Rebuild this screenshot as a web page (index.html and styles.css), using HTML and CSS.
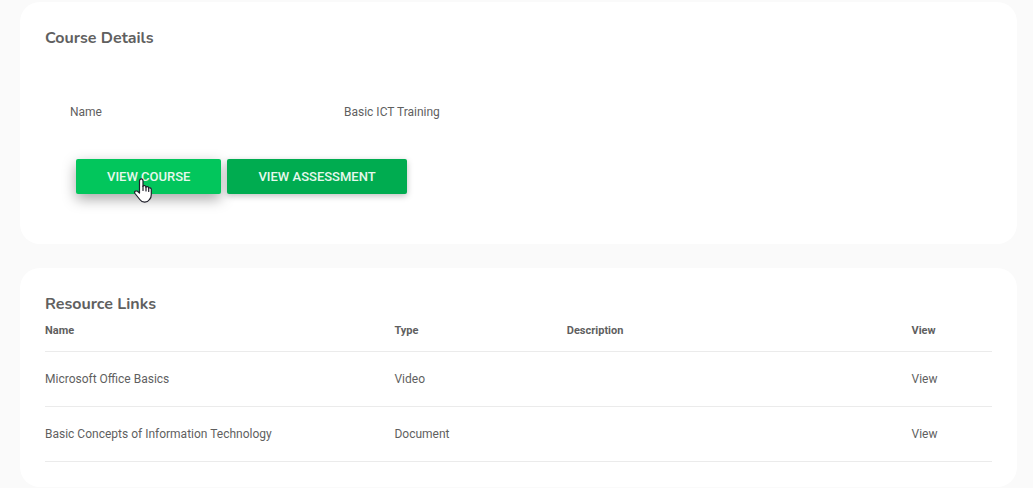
FILE: index.html
```html
<!DOCTYPE html>
<html lang="en">
<head>
  <meta charset="utf-8">
  <meta name="viewport" content="width=device-width, initial-scale=1">
  <title>Course Details</title>
  <link rel="stylesheet" href="styles.css">
</head>
<body class="page">
  <main class="stack">
    <section class="card" aria-labelledby="course-title">
      <h2 class="card-title" id="course-title">Course Details</h2>
      <div class="details">
        <dl class="detail-row">
          <dt class="detail-label">Name</dt>
          <dd class="detail-value">Basic ICT Training</dd>
        </dl>
        <div class="actions">
          <button class="button button-active" type="button">View Course
            <svg class="pointer" viewBox="0 0 18 25" width="18" height="25" aria-hidden="true">
              <path d="M5.500 15V3C5.500 .2 9 .2 9 3V8.500C9.300 7 12 7.200 12 9.300C12.500 8 14.700 8.300 14.700 10.300C15.300 9.300 17.300 9.700 17.300 11.500V16.500C17.300 18.700 16.500 20.500 15.500 21.500C13.500 24.800 8 25 5.800 21.500L1 15.500C-.2 13.500 1.800 12 3.500 13.300Z" fill="#fff" stroke="#20202b" stroke-width="1.200" stroke-linejoin="round"/>
              <path d="M9 8V12.500M12 9V13M14.700 10V13.500" fill="none" stroke="#20202b" stroke-width="1.200" stroke-linecap="round"/>
            </svg>
          </button>
          <button class="button" type="button">View Assessment</button>
        </div>
      </div>
    </section>

    <section class="card" aria-labelledby="links-title">
      <h2 class="card-title" id="links-title">Resource Links</h2>
      <table class="resources">
        <colgroup>
          <col class="col-name">
          <col class="col-type">
          <col class="col-description">
          <col class="col-view">
        </colgroup>
        <thead>
          <tr><th scope="col">Name</th><th scope="col">Type</th><th scope="col">Description</th><th scope="col">View</th></tr>
        </thead>
        <tbody>
          <tr><td>Microsoft Office Basics</td><td>Video</td><td></td><td><a class="link" href="#office">View</a></td></tr>
          <tr><td>Basic Concepts of Information Technology</td><td>Document</td><td></td><td><a class="link" href="#concepts">View</a></td></tr>
        </tbody>
      </table>
    </section>
  </main>
</body>
</html>
```

FILE: styles.css
```css
* {
  box-sizing: border-box;
}

.page {
  margin: 0;
  background: #fafafa;
  color: #5f5f5f;
  font: 12px/20px Roboto, "Liberation Sans", sans-serif;
}

.stack {
  display: flex;
  flex-direction: column;
  gap: 24px;
  padding: 2px 16px 1px 20px;
}

.card {
  padding: 25px;
  border-radius: 20px;
  background: #fff;
}

.card-title {
  margin: 0;
  font: 700 16px/22px Nunito, "Open Sans", sans-serif;
  color: #606060;
}

.details {
  padding: 53px 25px 25px;
}

.detail-row {
  display: grid;
  grid-template-columns: 274fr 623fr;
  margin: 0;
}

.detail-value {
  margin: 0;
}

.actions {
  display: flex;
  flex-wrap: wrap;
  gap: 6px;
  padding: 37px 6px 0;
}

.button {
  position: relative;
  height: 35px;
  padding: 0 31px;
  border: 0;
  border-radius: 2px;
  background: #00ac50;
  box-shadow: 0 2px 6px rgba(0, 0, 0, 0.25);
  color: #e6f8ed;
  font: 500 13px/20px Roboto, "Liberation Sans", sans-serif;
  text-transform: uppercase;
  cursor: pointer;
}

.button-active {
  background: #02c65c;
  box-shadow: 0 5px 14px rgba(0, 0, 0, 0.35);
}

.pointer {
  position: absolute;
  top: 19px;
  left: 58px;
}

.resources {
  width: 100%;
  border-collapse: collapse;
  table-layout: fixed;
}

.resources th,
.resources td {
  padding: 0;
  border-bottom: 1px solid #ebebeb;
  text-align: left;
}

.resources th {
  height: 36px;
  padding-top: 6px;
  font-size: 11px;
  font-weight: 700;
  vertical-align: top;
}

.resources td {
  height: 55px;
}

.col-name {
  width: 36.9%;
}

.col-type {
  width: 18.2%;
}

.col-description {
  width: 36.4%;
}

.col-view {
  width: 8.5%;
}

.link {
  color: inherit;
  text-decoration: none;
}
```
